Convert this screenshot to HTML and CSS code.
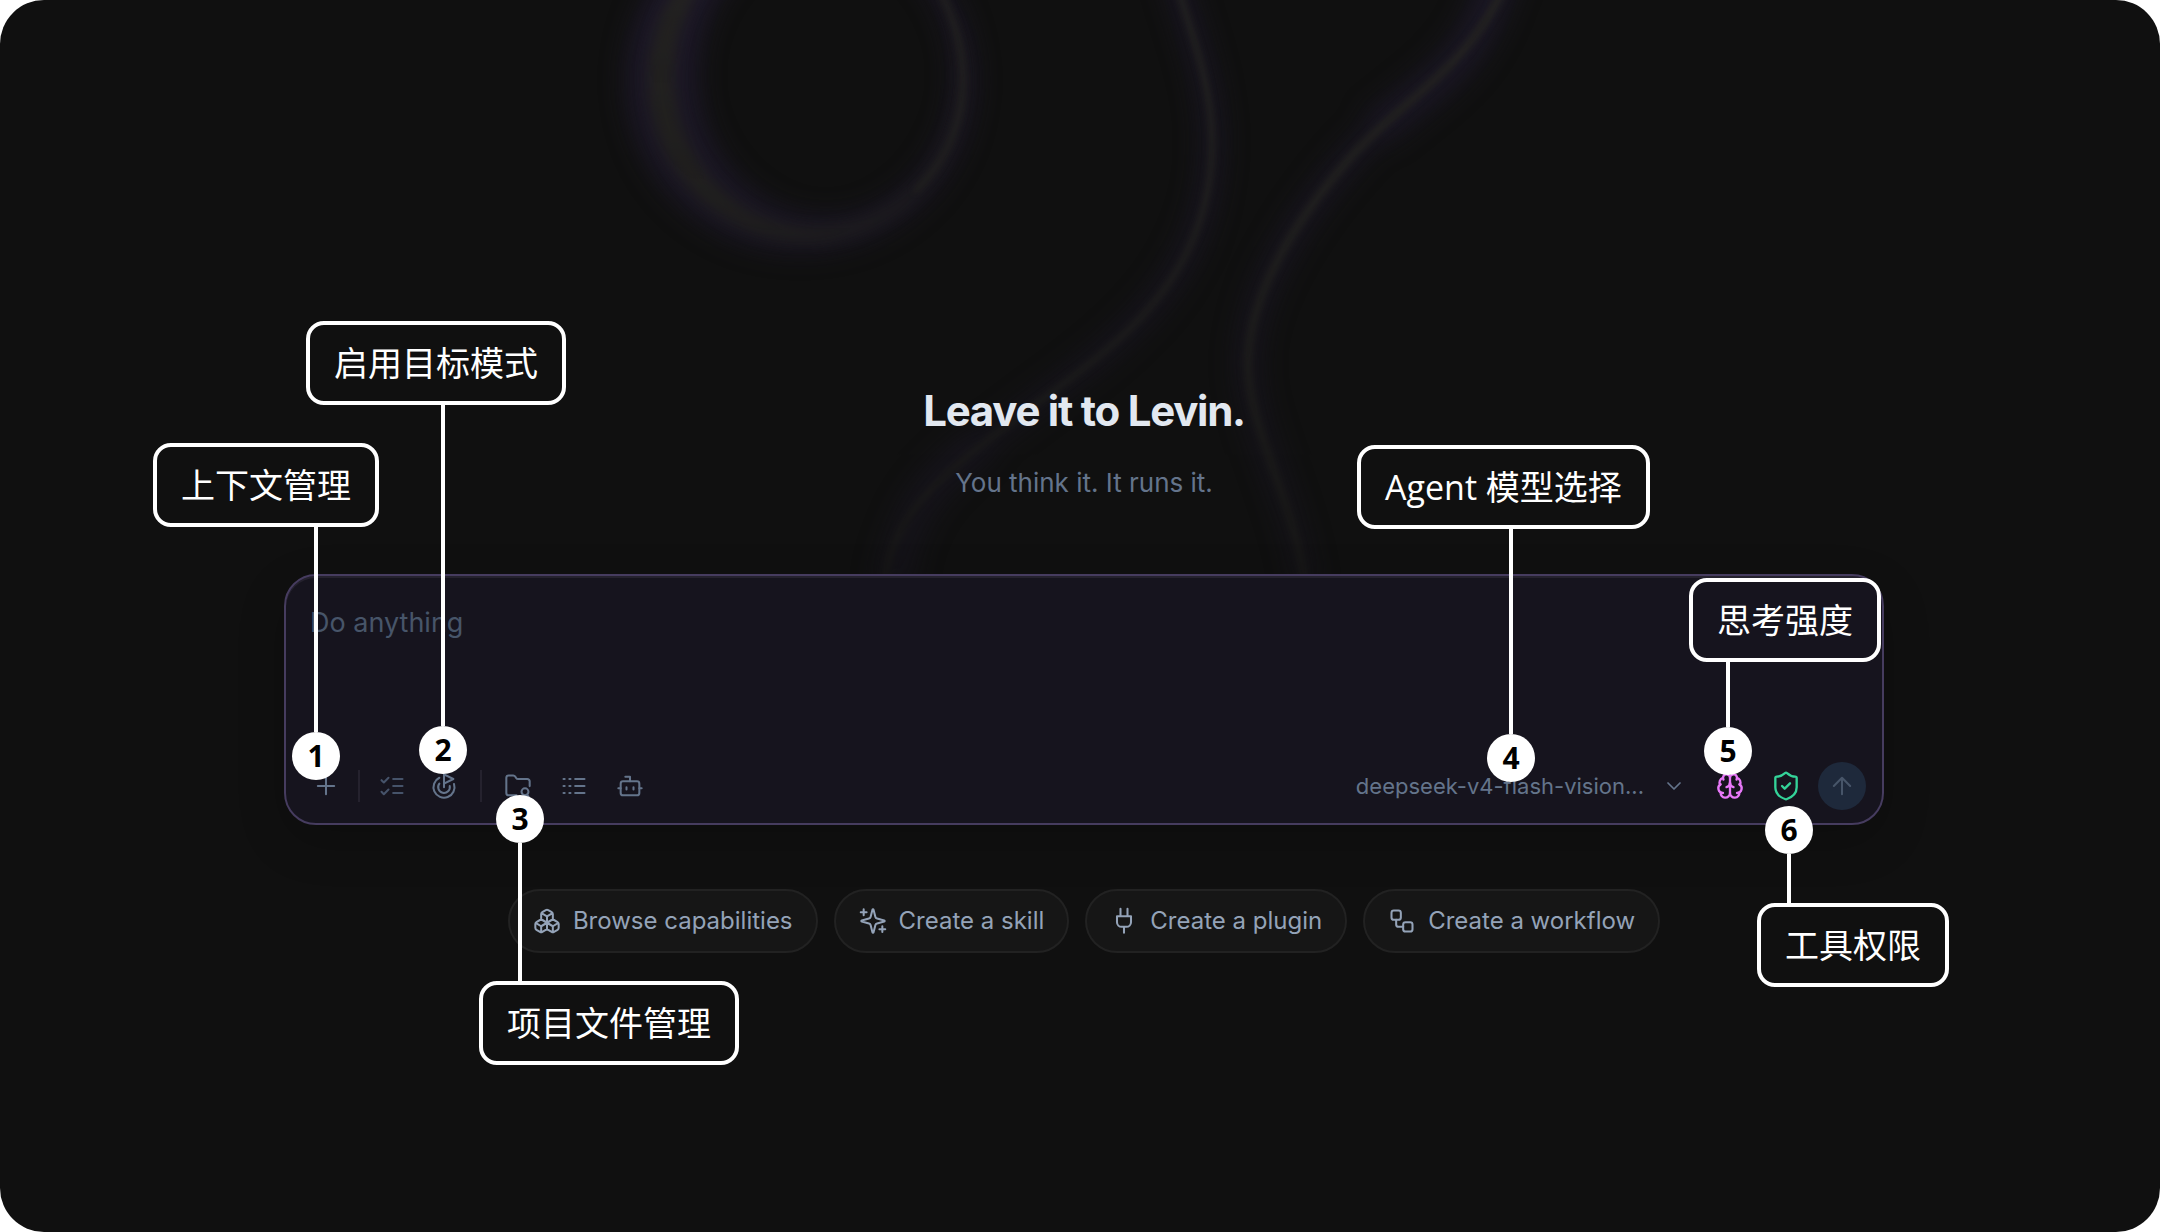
FILE: index.html
```html
<!DOCTYPE html>
<html lang="zh-CN">
<head>
<meta charset="utf-8">
<meta name="viewport" content="width=device-width, initial-scale=1">
<title>Levin</title>
<link rel="stylesheet" href="styles.css">
</head>
<body>
<main class="stage">
  <svg class="aura" viewBox="0 0 2160 574" preserveAspectRatio="xMidYMin slice" aria-hidden="true">
    <defs>
      <filter id="soft" x="-30%" y="-30%" width="160%" height="160%" color-interpolation-filters="sRGB"><feGaussianBlur stdDeviation="12"/></filter>
      <filter id="mid" x="-30%" y="-30%" width="160%" height="160%" color-interpolation-filters="sRGB"><feGaussianBlur stdDeviation="7"/></filter>
      <filter id="fine" x="-30%" y="-30%" width="160%" height="160%" color-interpolation-filters="sRGB"><feGaussianBlur stdDeviation="3"/></filter>
      <linearGradient id="fade" x1="0" y1="0" x2="0" y2="1">
        <stop offset="0" stop-color="#fff"/>
        <stop offset="0.45" stop-color="#fff" stop-opacity="0.8"/>
        <stop offset="1" stop-color="#fff" stop-opacity="0.35"/>
      </linearGradient>
      <mask id="fall" maskUnits="userSpaceOnUse" x="0" y="-100" width="2160" height="680"><rect y="-100" width="2160" height="680" fill="url(#fade)"/></mask>
    </defs>
    <g fill="none" mask="url(#fall)">
      <path d="M626 80a174 172 0 1 0 348 0a174 172 0 1 0-348 0ZM698 75a128 142 0 1 0 256 0a128 142 0 1 0-256 0Z" fill="#1d1829" fill-rule="evenodd" filter="url(#soft)"/>
      <g stroke="#1b1726" filter="url(#soft)">
        <path d="M1165 -60C1180 10 1212 70 1212 142C1212 290 1100 355 1024 413C960 462 885 510 885 590" stroke-width="20"/>
        <path d="M1520 -60C1490 60 1410 90 1350 158C1290 226 1248 300 1248 364C1248 430 1295 500 1306 590" stroke-width="22"/>
        <path d="M1510 -60C1480 60 1450 70 1376 130" stroke-width="36"/>
        <path d="M985 442C930 480 900 520 895 590" stroke-width="36"/>
      </g>
      <path d="M648 80a158 161 0 1 0 316 0a158 161 0 1 0-316 0ZM674 76a143 153 0 1 0 286 0a143 153 0 1 0-286 0Z" fill="#242321" fill-rule="evenodd" filter="url(#mid)"/>
      <g stroke="#252422" filter="url(#fine)">
        <path d="M915 191C948 160 963 120 963 80C963 40 950 10 935 -20" stroke-width="5"/>
        <path d="M1165 -60C1180 10 1212 70 1212 142C1212 290 1100 355 1024 413C960 462 885 510 885 590" stroke-width="6"/>
        <path d="M1520 -60C1490 60 1410 90 1350 158C1290 226 1248 300 1248 364C1248 430 1295 500 1306 590" stroke-width="8"/>
      </g>
    </g>
  </svg>

  <section class="hero">
    <h1 class="title">Leave it to Levin.</h1>
    <p class="subtitle">You think it. It runs it.</p>
  </section>

  <form class="composer">
    <textarea class="prompt" placeholder="Do anything" aria-label="Do anything"></textarea>
    <div class="toolbar">
      <div class="tools">
        <button class="tool" type="button" aria-label="Add context"><svg class="icon" viewBox="0 0 24 24"><path d="M5 12h14M12 5v14"/></svg></button>
        <span class="rule"></span>
        <div class="pair">
          <button class="tool dim" type="button" aria-label="Plan"><svg class="icon" viewBox="0 0 24 24"><path d="M13 6h8M13 12h8M13 18h8"/><path d="m3 17 2 2 4-4M3 7l2 2 4-4"/></svg></button>
          <button class="tool" type="button" aria-label="Goal mode"><svg class="icon" viewBox="0 0 24 24"><path d="M12 13V2l8 4-8 4"/><path d="M20.561 10.222a9 9 0 1 1-12.55-5.29"/><path d="M8.002 9.997a5 5 0 1 0 8.9 2.02"/></svg></button>
        </div>
        <span class="rule wide"></span>
        <div class="trio">
          <button class="tool" type="button" aria-label="Project files"><svg class="icon" viewBox="0 0 24 24"><path d="M10.7 20H4a2 2 0 0 1-2-2V5a2 2 0 0 1 2-2h3.9a2 2 0 0 1 1.69.9l.81 1.2a2 2 0 0 0 1.67.9H20a2 2 0 0 1 2 2v4.1"/><circle cx="18" cy="17" r="3"/><path d="m21 21-1.500-1.500"/></svg></button>
          <button class="tool" type="button" aria-label="Logs"><svg class="icon" viewBox="0 0 24 24"><path d="M13 12h8M13 18h8M13 6h8M3 12h1M3 18h1M3 6h1M8 12h1M8 18h1M8 6h1"/></svg></button>
          <button class="tool" type="button" aria-label="Agents"><svg class="icon" viewBox="0 0 24 24"><path d="M12 8V4H8"/><rect width="16" height="12" x="4" y="8" rx="2"/><path d="M2 14h2M20 14h2M15 13v2M9 13v2"/></svg></button>
        </div>
      </div>
      <div class="settings">
        <button class="model" type="button"><span>deepseek-v4-flash-vision...</span><svg class="icon small" viewBox="0 0 24 24"><path d="m6 9 6 6 6-6"/></svg></button>
        <button class="tool brain" type="button" aria-label="Thinking effort"><svg class="icon bold" viewBox="0 0 24 24"><path d="M12 18V5"/><path d="M15 13a4.170 4.170 0 0 1-3-4 4.170 4.170 0 0 1-3 4"/><path d="M17.598 6.500A3 3 0 1 0 12 5a3 3 0 1 0-5.598 1.500"/><path d="M17.997 5.125a4 4 0 0 1 2.526 5.770"/><path d="M18 18a4 4 0 0 0 2-7.464"/><path d="M19.967 17.483A4 4 0 1 1 12 18a4 4 0 1 1-7.967-.517"/><path d="M6 18a4 4 0 0 1-2-7.464"/><path d="M6.003 5.125a4 4 0 0 0-2.526 5.770"/></svg></button>
        <button class="tool shield" type="button" aria-label="Tool permissions"><svg class="icon large" viewBox="0 0 24 24"><path d="M20 13c0 5-3.500 7.500-7.660 8.950a1 1 0 0 1-.67-.01C7.500 20.500 4 18 4 13V6a1 1 0 0 1 1-1c2 0 4.500-1.200 6.240-2.720a1.170 1.170 0 0 1 1.520 0C14.510 3.810 17 5 19 5a1 1 0 0 1 1 1z"/><path d="m9 12 2 2 4-4"/></svg></button>
        <button class="send" type="submit" aria-label="Send"><svg class="icon" viewBox="0 0 24 24"><path d="m5 12 7-7 7 7M12 19V5"/></svg></button>
      </div>
    </div>
  </form>

  <nav class="chips" aria-label="Shortcuts">
    <button class="chip" type="button"><svg class="icon" viewBox="0 0 24 24"><path d="M2.970 12.920A2 2 0 0 0 2 14.630v3.240a2 2 0 0 0 .970 1.710l3 1.800a2 2 0 0 0 2.060 0L12 19v-5.500l-5-3-4.030 2.420ZM7 16.500l-4.740-2.850M7 16.500l5-3M7 16.500v5.170M12 13.500V19l3.970 2.380a2 2 0 0 0 2.060 0l3-1.800a2 2 0 0 0 .970-1.710v-3.240a2 2 0 0 0-.970-1.710L17 10.500l-5 3ZM17 16.500l-5-3M17 16.500l4.740-2.850M17 16.500v5.170M7.970 4.420A2 2 0 0 0 7 6.130v4.370l5 3 5-3V6.130a2 2 0 0 0-.970-1.710l-3-1.800a2 2 0 0 0-2.060 0l-3 1.800ZM12 8 7.260 5.150M12 8l4.740-2.850M12 13.500V8"/></svg>Browse capabilities</button>
    <button class="chip" type="button"><svg class="icon" viewBox="0 0 24 24"><path d="M9.937 15.500A2 2 0 0 0 8.500 14.063l-6.135-1.582a.5.5 0 0 1 0-.962L8.500 9.936A2 2 0 0 0 9.937 8.500l1.582-6.135a.5.5 0 0 1 .963 0L14.063 8.500A2 2 0 0 0 15.500 9.937l6.135 1.581a.5.5 0 0 1 0 .964L15.500 14.063a2 2 0 0 0-1.437 1.437l-1.582 6.135a.5.5 0 0 1-.963 0zM20 16.500v5M22.500 19h-5M4 2v5M6.500 4.500h-5"/></svg>Create a skill</button>
    <button class="chip" type="button"><svg class="icon" viewBox="0 0 24 24"><path d="M12 22v-5M9 8V1.500M15 8V1.500M18 8v5a4 4 0 0 1-4 4h-4a4 4 0 0 1-4-4V8Z"/></svg>Create a plugin</button>
    <button class="chip" type="button"><svg class="icon" viewBox="0 0 24 24"><rect width="8" height="8" x="3" y="3" rx="2"/><path d="M7 11v4a2 2 0 0 0 2 2h4"/><rect width="8" height="8" x="13" y="13" rx="2"/></svg>Create a workflow</button>
  </nav>

  <aside class="notes" aria-label="Annotations">
    <div class="note n1"><span class="label">上下文管理</span><i class="wire"></i><b class="dot">1</b></div>
    <div class="note n2"><span class="label">启用目标模式</span><i class="wire"></i><b class="dot">2</b></div>
    <div class="note n3"><b class="dot">3</b><i class="wire"></i><span class="label">项目文件管理</span></div>
    <div class="note n4"><span class="label">Agent 模型选择</span><i class="wire"></i><b class="dot">4</b></div>
    <div class="note n5"><span class="label">思考强度</span><i class="wire"></i><b class="dot">5</b></div>
    <div class="note n6"><b class="dot">6</b><i class="wire"></i><span class="label">工具权限</span></div>
  </aside>
</main>
</body>
</html>
```
FILE: styles.css
```css
* {
  box-sizing: border-box;
}

body {
  margin: 0;
  background: #fff;
  font-family: Inter, "Noto Sans CJK SC", sans-serif;
}

button,
textarea {
  margin: 0;
  padding: 0;
  border: 0;
  background: none;
  color: inherit;
  font: inherit;
}

button {
  cursor: pointer;
}

.stage {
  position: relative;
  display: flex;
  flex-direction: column;
  align-items: center;
  min-height: 100vh;
  padding: 383px 0 96px 8px;
  border-radius: 44px;
  background: #101010;
  overflow: hidden;
}

.aura {
  position: absolute;
  inset: 0 0 auto;
  width: 100%;
  height: 574px;
}

.hero {
  position: relative;
  display: flex;
  flex-direction: column;
  align-items: center;
  gap: 28px;
  padding-bottom: 75px;
  text-align: center;
}

.title,
.subtitle {
  margin: 0;
}

.title {
  color: #e2e8f0;
  font-size: 42px;
  font-weight: 700;
  line-height: 56px;
  letter-spacing: -0.03em;
}

.subtitle {
  color: #64748b;
  font-size: 26px;
  line-height: 32px;
}

.composer {
  position: relative;
  display: flex;
  flex-direction: column;
  width: 75%;
  max-width: 1600px;
  border: 2px solid #463c5f;
  border-radius: 32px;
  background: #16141e;
  box-shadow: inset 0 2px 0 #25222e, 0 16px 48px rgba(0, 0, 0, 0.2);
}

.prompt {
  height: 182px;
  padding: 29px 24px 0;
  outline: 0;
  resize: none;
  color: #e2e8f0;
  font-size: 27px;
  line-height: 36px;
}

.prompt::placeholder {
  color: #475569;
  opacity: 1;
}

.toolbar {
  display: flex;
  justify-content: space-between;
  padding: 4px 16px 13px;
  color: #64748b;
}

.tools,
.settings,
.pair,
.trio {
  display: flex;
  align-items: center;
}

.tools,
.trio,
.settings {
  gap: 8px;
}

.pair {
  gap: 4px;
}

.tool,
.send {
  display: grid;
  place-items: center;
  width: 48px;
  height: 48px;
}

.dim {
  color: #46536a;
}

.icon {
  flex: none;
  width: 28px;
  height: 28px;
  fill: none;
  stroke: currentColor;
  stroke-width: 1.75;
  stroke-linecap: round;
  stroke-linejoin: round;
}

.bold {
  stroke-width: 2;
}

.small {
  width: 24px;
  height: 24px;
}

.large {
  width: 32px;
  height: 32px;
}

.rule {
  width: 2px;
  height: 32px;
  background: #25222e;
}

.wide {
  margin: 0 4px;
}

.model {
  display: flex;
  align-items: center;
  gap: 18px;
  padding-right: 12px;
  font-size: 22px;
  line-height: 32px;
}

.brain {
  color: #e879f9;
}

.shield {
  color: #34d399;
}

.send {
  border-radius: 50%;
  background: #1e293b;
  color: #475569;
}

.chips {
  position: relative;
  display: flex;
  flex-wrap: wrap;
  justify-content: center;
  gap: 16px;
  margin-top: 64px;
}

.chip {
  display: flex;
  align-items: center;
  gap: 12px;
  padding: 14px 23px;
  border: 2px solid #222;
  border-radius: 32px;
  background: #161616;
  color: #94a3b8;
  font-size: 24px;
  line-height: 32px;
}

/* Callouts pinned over the interface */
.note {
  position: absolute;
  display: flex;
  flex-direction: column;
  align-items: flex-start;
  font-family: "Open Sans", "Noto Sans CJK SC", sans-serif;
}

.label {
  padding: 14px 24px;
  border: 4px solid #fff;
  border-radius: 18px;
  color: #fff;
  font-size: 34px;
  line-height: 48px;
  white-space: nowrap;
}

.wire {
  width: 4px;
  margin-left: calc(var(--stem) - 2px);
  background: #fff;
}

.dot {
  width: 48px;
  height: 48px;
  margin-left: calc(var(--stem) - 24px);
  border-radius: 50%;
  background: #fff;
  color: #000;
  font-size: 30px;
  font-weight: 700;
  line-height: 48px;
  text-align: center;
}

.n1 { left: 153px; top: 443px; --stem: 163px; }
.n1 .wire { height: 205px; }
.n2 { left: 306px; top: 321px; --stem: 137px; }
.n2 .wire { height: 321px; }
.n3 { left: 479px; top: 795px; --stem: 41px; }
.n3 .wire { height: 138px; }
.n4 { left: 1357px; top: 445px; --stem: 154px; }
.n4 .wire { height: 205px; }
.n5 { left: 1689px; top: 578px; --stem: 39px; }
.n5 .wire { height: 65px; }
.n6 { left: 1757px; top: 806px; --stem: 32px; }
.n6 .wire { height: 49px; }
```
